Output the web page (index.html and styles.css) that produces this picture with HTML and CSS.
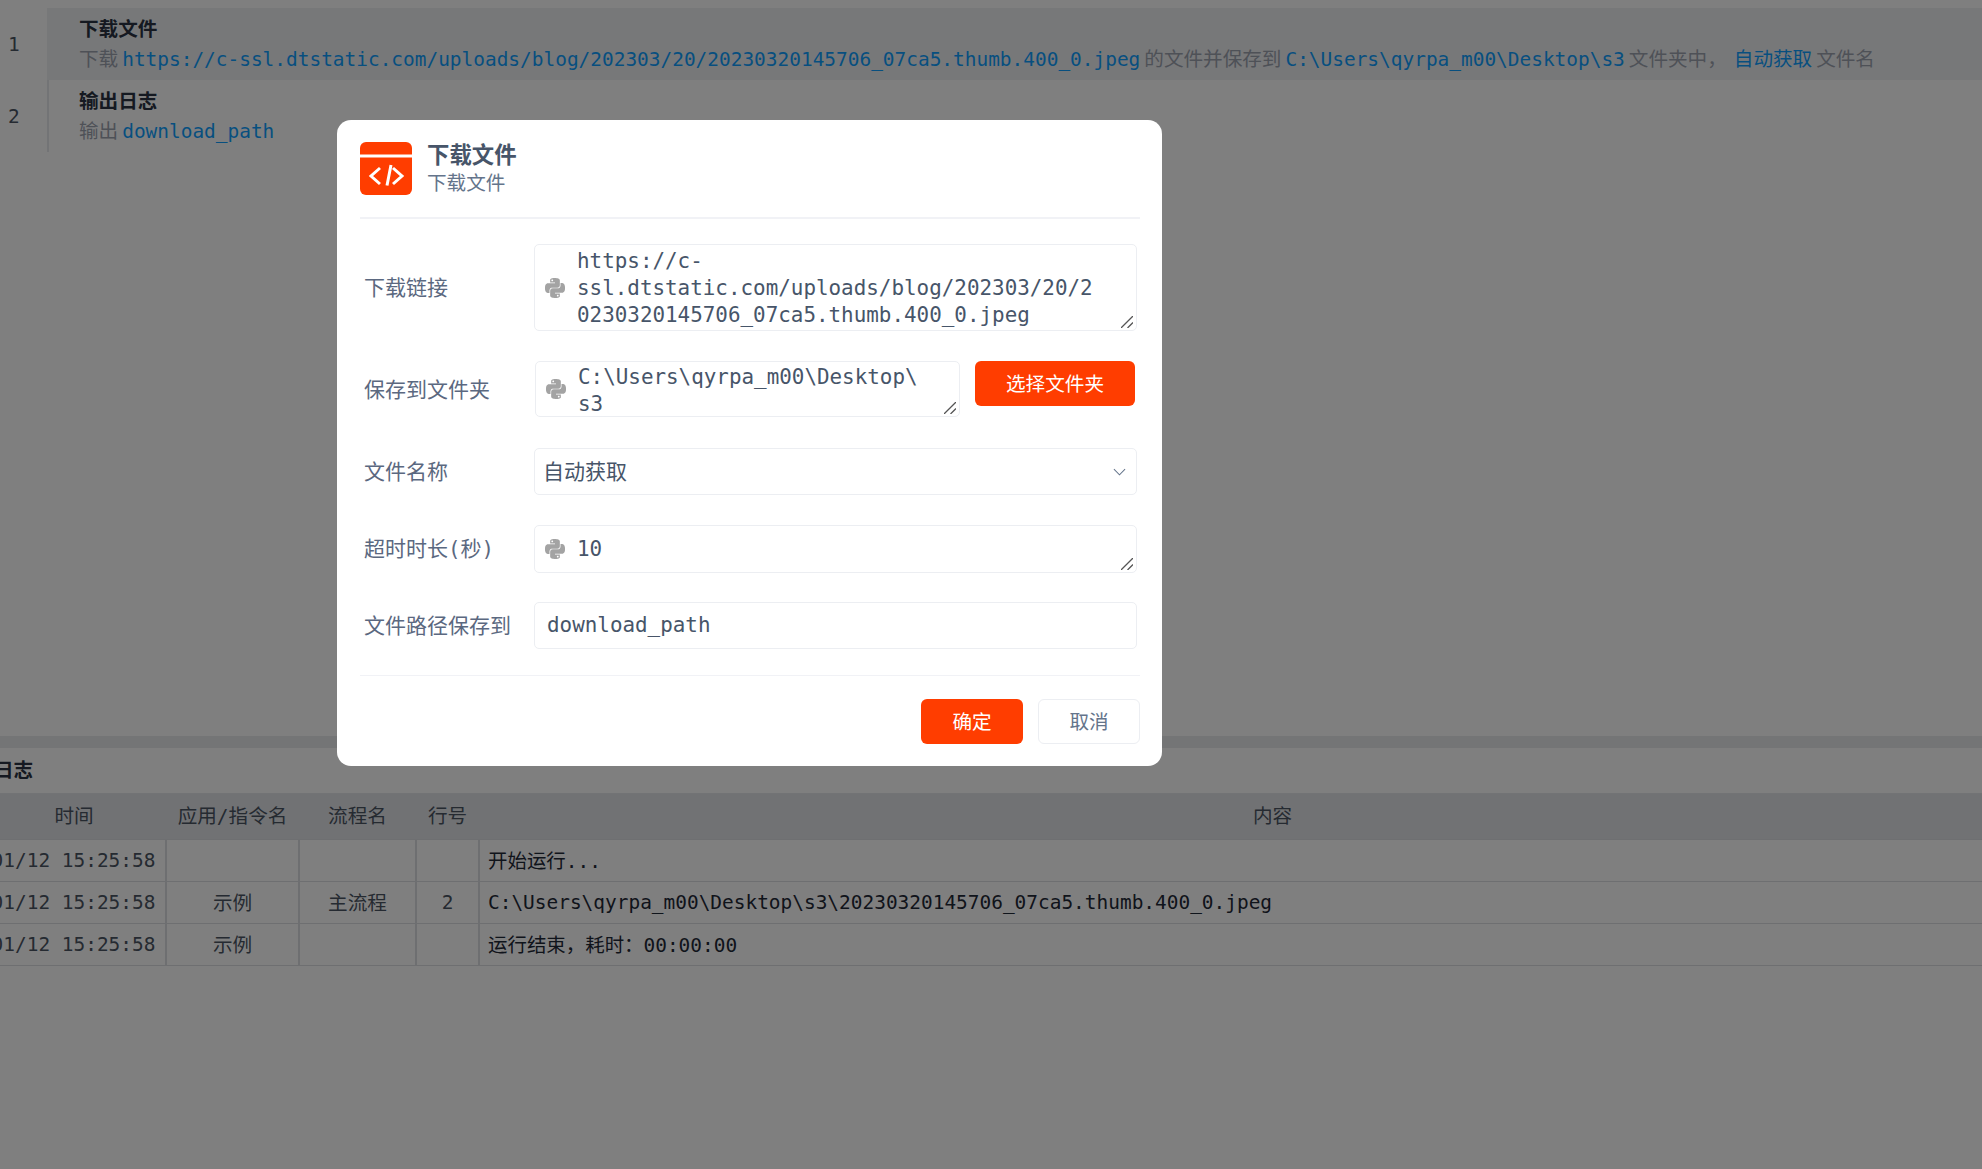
FILE: index.html
```html
<!DOCTYPE html>
<html lang="zh">
<head>
<meta charset="utf-8">
<title>下载文件</title>
<link rel="stylesheet" href="styles.css">
</head>
<body>
<svg class="defs" aria-hidden="true">
  <symbol id="python" viewBox="0 0 24 24"><path d="M14.25.18l.9.2.73.26.59.3.45.32.34.34.25.34.16.33.1.3.04.26.02.2-.01.13V8.5l-.05.63-.13.55-.21.46-.26.38-.3.31-.33.25-.35.19-.35.14-.33.1-.3.07-.26.04-.21.02H8.77l-.69.05-.59.14-.5.22-.41.27-.33.32-.27.35-.2.36-.15.37-.1.35-.07.32-.04.27-.02.21v3.06H3.17l-.21-.03-.28-.07-.32-.12-.35-.18-.36-.26-.36-.36-.35-.46-.32-.59-.28-.73-.21-.88-.14-1.05-.05-1.23.06-1.22.16-1.04.24-.87.32-.71.36-.57.4-.44.42-.33.42-.24.4-.16.36-.1.32-.05.24-.01h.16l.06.01h8.16v-.83H6.18l-.01-2.75-.02-.37.05-.34.11-.31.17-.28.25-.26.31-.23.38-.2.44-.18.51-.15.58-.12.64-.1.71-.06.77-.04.84-.02 1.27.05zm-6.3 1.98l-.23.33-.08.41.08.41.23.34.33.22.41.09.41-.09.33-.22.23-.34.08-.41-.08-.41-.23-.33-.33-.22-.41-.09-.41.09zm13.09 3.95l.28.06.32.12.35.18.36.27.36.35.35.47.32.59.28.73.21.88.14 1.04.05 1.23-.06 1.23-.16 1.04-.24.86-.32.71-.36.57-.4.45-.42.33-.42.24-.4.16-.36.09-.32.05-.24.02-.16-.01h-8.22v.82h5.84l.01 2.76.02.36-.05.34-.11.31-.17.29-.25.25-.31.24-.38.2-.44.17-.51.15-.58.13-.64.09-.71.07-.77.04-.84.01-1.27-.04-1.07-.14-.9-.2-.73-.25-.59-.3-.45-.33-.34-.34-.25-.34-.16-.33-.1-.3-.04-.25-.02-.2.01-.13v-5.34l.05-.64.13-.54.21-.46.26-.38.3-.32.33-.24.35-.2.35-.14.33-.1.3-.06.26-.04.21-.02.13-.01h5.84l.69-.05.59-.14.5-.21.41-.28.33-.32.27-.35.2-.36.15-.36.1-.35.07-.32.04-.28.02-.21V6.07h2.09l.14.01zm-6.47 14.25l-.23.33-.08.41.08.41.23.33.33.23.41.08.41-.08.33-.23.23-.33.08-.41-.08-.41-.23-.33-.33-.23-.41-.08-.41.08z"/></symbol>
  <symbol id="grip" viewBox="0 0 12 12"><path d="M0 12 L12 0 M6.5 12 L12 6.5" fill="none" stroke="#555" stroke-width="1.3"/></symbol>
</svg>

<main class="page">
  <section class="flow">
    <div class="step step-active">
      <div class="step-no">1</div>
      <div class="step-body">
        <div class="step-title">下载文件</div>
        <div class="step-desc">下载<span class="val">https://c-ssl.dtstatic.com/uploads/blog/202303/20/20230320145706_07ca5.thumb.400_0.jpeg</span>的文件并保存到<span class="val">C:\Users\qyrpa_m00\Desktop\s3</span>文件夹中，<span class="val val-cjk">自动获取</span>文件名</div>
      </div>
    </div>
    <div class="step">
      <div class="step-no">2</div>
      <div class="step-body">
        <div class="step-title">输出日志</div>
        <div class="step-desc">输出<span class="val">download_path</span></div>
      </div>
    </div>
  </section>

  <div class="split"></div>

  <section class="log">
    <h2 class="log-title">日志</h2>
    <table class="log-table">
      <colgroup><col class="c-time"><col class="c-app"><col class="c-flow"><col class="c-line"><col></colgroup>
      <thead>
        <tr><th>时间</th><th>应用<span class="mono-char">/</span>指令名</th><th>流程名</th><th>行号</th><th>内容</th></tr>
      </thead>
      <tbody>
        <tr><td class="mono">01/12 15:25:58</td><td></td><td></td><td></td><td class="content content-cjk">开始运行...</td></tr>
        <tr><td class="mono">01/12 15:25:58</td><td class="cjk">示例</td><td class="cjk">主流程</td><td class="mono">2</td><td class="content">C:\Users\qyrpa_m00\Desktop\s3\20230320145706_07ca5.thumb.400_0.jpeg</td></tr>
        <tr><td class="mono">01/12 15:25:58</td><td class="cjk">示例</td><td></td><td></td><td class="content content-cjk">运行结束，耗时：00:00:00</td></tr>
      </tbody>
    </table>
  </section>
</main>

<div class="overlay">
  <div class="modal">
    <header class="modal-head">
      <svg class="app-icon" viewBox="0 0 52 53" aria-hidden="true">
        <rect width="52" height="53" rx="6" fill="#ff3d00"/>
        <rect y="12.5" width="52" height="3" fill="#fff"/>
        <path d="M20 26 L11 34 L20 42 M33 26 L42 34 L33 42 M31 23 L27 43.5" fill="none" stroke="#fff" stroke-width="3"/>
      </svg>
      <div class="head-text">
        <div class="head-title">下载文件</div>
        <div class="head-sub">下载文件</div>
      </div>
    </header>

    <div class="form">
      <div class="row row-1">
        <label class="lab">下载链接</label>
        <div class="box box-tall">
          <svg class="py"><use href="#python"/></svg>
          <textarea class="code" readonly spellcheck="false">https://c-ssl.dtstatic.com/uploads/blog/202303/20/20230320145706_07ca5.thumb.400_0.jpeg</textarea>
          <svg class="grip"><use href="#grip"/></svg>
        </div>
      </div>
      <div class="row row-2">
        <label class="lab lab-low">保存到文件夹</label>
        <div class="with-btn">
          <div class="box box-mid">
            <svg class="py"><use href="#python"/></svg>
            <textarea class="code code-mid" readonly spellcheck="false">C:\Users\qyrpa_m00\Desktop\s3</textarea>
            <svg class="grip"><use href="#grip"/></svg>
          </div>
          <button class="btn btn-primary btn-pick" type="button">选择文件夹</button>
        </div>
      </div>
      <div class="row row-3">
        <label class="lab">文件名称</label>
        <div class="box box-select">
          <span class="select-value">自动获取</span>
          <svg class="chev" viewBox="0 0 14 8" aria-hidden="true"><path d="M1 1 L7 7 L13 1" fill="none" stroke="#64748b" stroke-width="1.1"/></svg>
        </div>
      </div>
      <div class="row row-4">
        <label class="lab">超时时长<span class="mono-char">(</span>秒<span class="mono-char">)</span></label>
        <div class="box box-line">
          <svg class="py"><use href="#python"/></svg>
          <textarea class="code code-line" readonly spellcheck="false">10</textarea>
          <svg class="grip"><use href="#grip"/></svg>
        </div>
      </div>
      <div class="row row-5">
        <label class="lab">文件路径保存到</label>
        <div class="box box-plain"><span class="plain-value">download_path</span></div>
      </div>
    </div>

    <footer class="modal-foot">
      <button class="btn btn-primary btn-foot" type="button">确定</button>
      <button class="btn btn-ghost btn-foot" type="button">取消</button>
    </footer>
  </div>
</div>
</body>
</html>
```

FILE: styles.css
```css
* { box-sizing: border-box; }
html, body { margin: 0; height: 100%; }
body {
  overflow: hidden;
  background: #fff;
  font-family: "Noto Sans CJK SC", "Noto Sans", sans-serif;
  font-size: 19.6px;
  color: #1f2937;
}
.defs { display: none; }
.page { height: 100vh; display: flex; flex-direction: column; overflow: hidden; }
.mono-char { font-family: "DejaVu Sans Mono", monospace; font-size: .99em; }

/* flow list */
.flow { height: 736px; flex: none; padding-top: 8px; }
.step { display: flex; height: 72px; }
.step-no {
  width: 47px; flex: none;
  padding-top: 17px; padding-left: 8px;
  font-family: "DejaVu Sans Mono", monospace; font-size: 19.45px; line-height: 39px;
  color: #4b5563; background: #fff;
}
.step-body {
  flex: 1; min-width: 0;
  border-left: 2px solid #e7e8ec;
  padding: 6px 0 0 30px;
  white-space: nowrap;
}
.step-active .step-body { background: #eff0f3; border-left-color: #eff0f3; }
.step-title { font-weight: 700; line-height: 28px; color: #2a3342; }
.step-desc { line-height: 28px; margin-top: 2px; color: #9ca3af; }
.val {
  font-family: "DejaVu Sans Mono", "Noto Sans CJK SC", monospace;
  font-size: 19.45px; color: #0f9fff; margin: 0 4px;
}
.val-cjk { font-size: 19.6px; margin: 0 4px 0 7px; }

.split { height: 12px; flex: none; background: #e8eaed; }

/* log */
.log { flex: 1; margin-left: -18px; width: 2084px; }
.log-title { margin: 0; padding-left: 12px; height: 45px; font-size: 19.6px; line-height: 42px; font-weight: 700; color: #2a3342; }
.log-table { width: 2084px; table-layout: fixed; border-collapse: collapse; border-top: 1px solid #e5e7eb; }
.c-time { width: 184px; }
.c-app { width: 133px; }
.c-flow { width: 117px; }
.c-line { width: 63px; }
.log-table th {
  height: 46px; padding: 0 0 4px; font-weight: 400; text-align: center;
  background: #e2e4e9; color: #4b5563; border-bottom: 1px solid #dcdee3;
}
.log-table td {
  height: 42px; padding: 0; text-align: center; color: #4b5563;
  border-bottom: 1px solid #dcdee3; border-right: 2px solid #dcdee3;
}
.log-table td:last-child { border-right: none; }
.log-table td.cjk { padding-bottom: 2px; }
.log-table td.mono { font-family: "DejaVu Sans Mono", monospace; font-size: 19.45px; }
.log-table td.content {
  text-align: left; padding-left: 8px; color: #1f2937;
  font-family: "DejaVu Sans Mono", "Noto Sans CJK SC", monospace; font-size: 19.45px;
}
.log-table td.content-cjk { padding-bottom: 2px; }

/* modal */
.overlay {
  position: fixed; inset: 0;
  background: rgba(0, 0, 0, .5);
  padding: 120px 0 0 337px;
}
.modal {
  width: 825px; height: 646px;
  background: #fff; border-radius: 14px;
  padding: 22px 22px 0 23px;
}
.modal-head {
  display: flex; gap: 16px; height: 77px;
  border-bottom: 2px solid #f1f2f6;
}
.app-icon { width: 52px; height: 53px; flex: none; }
.head-title { font-size: 22.4px; line-height: 30px; font-weight: 700; color: #475569; margin-top: -4px; margin-left: -1px; }
.head-sub { font-size: 19.6px; line-height: 28px; color: #64748b; margin-top: 0; margin-left: -1px; }

.form { padding: 0 3px 0 4px; }
.row { display: grid; grid-template-columns: 170px 1fr; align-items: center; }
.row-1 { margin-top: 25px; }
.row-2 { margin-top: 30px; align-items: start; }
.row-3 { margin-top: 31px; }
.row-4 { margin-top: 30px; }
.row-5 { margin-top: 29px; }
.lab { font-size: 21px; line-height: 30px; color: #5b6880; margin-top: -3px; }
.lab-low { padding-top: 12px; margin-top: 0; }

.box {
  position: relative;
  display: flex; align-items: center;
  border: 1px solid #eceef2; border-radius: 5px; background: #fff;
  padding-left: 10px; color: #475569;
}
.box-tall { height: 87px; }
.box-mid { height: 56px; width: 425px; flex: none; margin-left: 1px; }
.box-select { height: 47px; justify-content: space-between; padding-left: 8px; padding-right: 10px; }
.box-line { height: 48px; }
.box-plain { height: 47px; padding-left: 12px; }
.with-btn { display: flex; align-items: flex-start; gap: 15px; }

.py { width: 20px; height: 20px; flex: none; fill: #a3a3a3; }
.grip { position: absolute; right: 3px; bottom: 2px; width: 12px; height: 12px; }
.code {
  flex: 1; min-width: 0; height: 100%;
  margin: 0 0 0 12px; padding: 3px 36px 0 0;
  border: 0; outline: 0; background: transparent; overflow: hidden; resize: none;
  font-family: "DejaVu Sans Mono", monospace; font-size: 20.9px; line-height: 27px; color: #475569;
}
.code-mid { padding-top: 2px; }
.code-line { padding-top: 10px; }
.plain-value { font-family: "DejaVu Sans Mono", monospace; font-size: 20.9px; margin-top: -1px; }
.select-value { font-size: 21px; margin-top: -3px; }
.chev { width: 13px; height: 8px; }

/* buttons */
.btn {
  font-family: inherit; font-size: 19.6px; border-radius: 6px; padding: 0 0 3px; cursor: pointer;
}
.btn-primary { background: #ff3d00; color: #fff; border: 0; }
.btn-ghost { background: #fff; color: #64748b; border: 1px solid #eceef2; }
.btn-pick { width: 160px; height: 45px; }
.btn-foot { width: 102px; height: 45px; }
.modal-foot {
  margin-top: 26px; padding-top: 23px;
  border-top: 1px solid #f1f2f6;
  display: flex; justify-content: flex-end; gap: 15px;
}
```
